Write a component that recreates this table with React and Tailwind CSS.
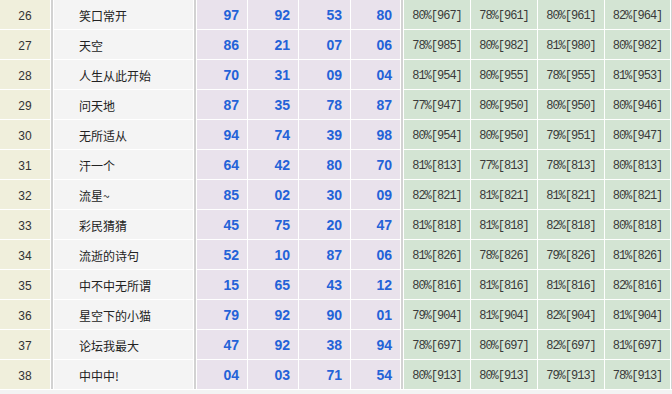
import React from 'react';

const rows = [
  ['26', '笑口常开', ['97', '92', '53', '80'], ['80%[967]', '78%[961]', '80%[961]', '82%[964]']],
  ['27', '天空', ['86', '21', '07', '06'], ['78%[985]', '80%[982]', '81%[980]', '80%[982]']],
  ['28', '人生从此开始', ['70', '31', '09', '04'], ['81%[954]', '80%[955]', '78%[955]', '81%[953]']],
  ['29', '问天地', ['87', '35', '78', '87'], ['77%[947]', '80%[950]', '80%[950]', '80%[946]']],
  ['30', '无所适从', ['94', '74', '39', '98'], ['80%[954]', '80%[950]', '79%[951]', '80%[947]']],
  ['31', '汗一个', ['64', '42', '80', '70'], ['81%[813]', '77%[813]', '78%[813]', '80%[813]']],
  ['32', '流星~', ['85', '02', '30', '09'], ['82%[821]', '81%[821]', '81%[821]', '80%[821]']],
  ['33', '彩民猜猜', ['45', '75', '20', '47'], ['81%[818]', '81%[818]', '82%[818]', '80%[818]']],
  ['34', '流逝的诗句', ['52', '10', '87', '06'], ['81%[826]', '78%[826]', '79%[826]', '81%[826]']],
  ['35', '中不中无所谓', ['15', '65', '43', '12'], ['80%[816]', '81%[816]', '81%[816]', '82%[816]']],
  ['36', '星空下的小猫', ['79', '92', '90', '01'], ['79%[904]', '81%[904]', '82%[904]', '81%[904]']],
  ['37', '论坛我最大', ['47', '92', '38', '94'], ['78%[697]', '80%[697]', '82%[697]', '81%[697]']],
  ['38', '中中中!', ['04', '03', '71', '54'], ['80%[913]', '80%[913]', '79%[913]', '78%[913]']],
];

const purpleW = ['w-[50px]', 'w-[50px]', 'w-[51px]', 'w-[49px]'];
const greenW = ['w-[66px]', 'w-[66px]', 'w-[66px]', 'w-[65px]'];

const Bar = () => <div className="w-[2px] mx-px self-stretch bg-[#d2d2d2]" />;

export default function App() {
  return (
    <div className="w-[672px] h-[394px] overflow-hidden bg-[#f3f3f3] font-['Liberation_Sans','Noto_Sans_CJK_SC',sans-serif]">
      <div className="flex bg-white pb-px">
        {/* rank */}
        <div className="flex flex-col gap-px w-[50px]">
          {rows.map((r) => (
            <div key={r[0]} className="h-[29px] bg-[#f0efdc] flex items-center justify-center pt-[3px] text-[12px] text-[#333]">
              {r[0]}
            </div>
          ))}
        </div>
        <Bar />
        {/* name */}
        <div className="flex flex-col gap-px w-[139px]">
          {rows.map((r) => (
            <div key={r[0]} className="h-[29px] bg-[#f4f4f4] flex items-center pl-[25px] pt-[3px] text-[12px] text-[#222] font-['Noto_Sans_CJK_SC',sans-serif]">
              {r[1]}
            </div>
          ))}
        </div>
        <Bar />
        {/* numbers */}
        <div className="flex flex-col gap-px">
          {rows.map((r) => (
            <div key={r[0]} className="flex gap-px">
              {r[2].map((n, i) => (
                <div key={i} className={`${purpleW[i]} h-[29px] bg-[#e9e2ec] flex items-center justify-end pr-[8px] pt-px text-[14px] font-bold text-[#2462d8]`}>
                  {n}
                </div>
              ))}
            </div>
          ))}
        </div>
        <Bar />
        {/* rates */}
        <div className="flex flex-col gap-px">
          {rows.map((r) => (
            <div key={r[0]} className="flex gap-px">
              {r[3].map((t, i) => (
                <div key={i} className={`${greenW[i]} h-[29px] bg-[#d3e4d3] flex items-center justify-center pt-[3px] text-[12px] tracking-[-1px] text-[#3a3a3a] font-['Liberation_Mono',monospace]`}>
                  {t}
                </div>
              ))}
            </div>
          ))}
        </div>
        <div className="w-px ml-px self-stretch bg-[#d2d2d2]" />
      </div>
    </div>
  );
}
